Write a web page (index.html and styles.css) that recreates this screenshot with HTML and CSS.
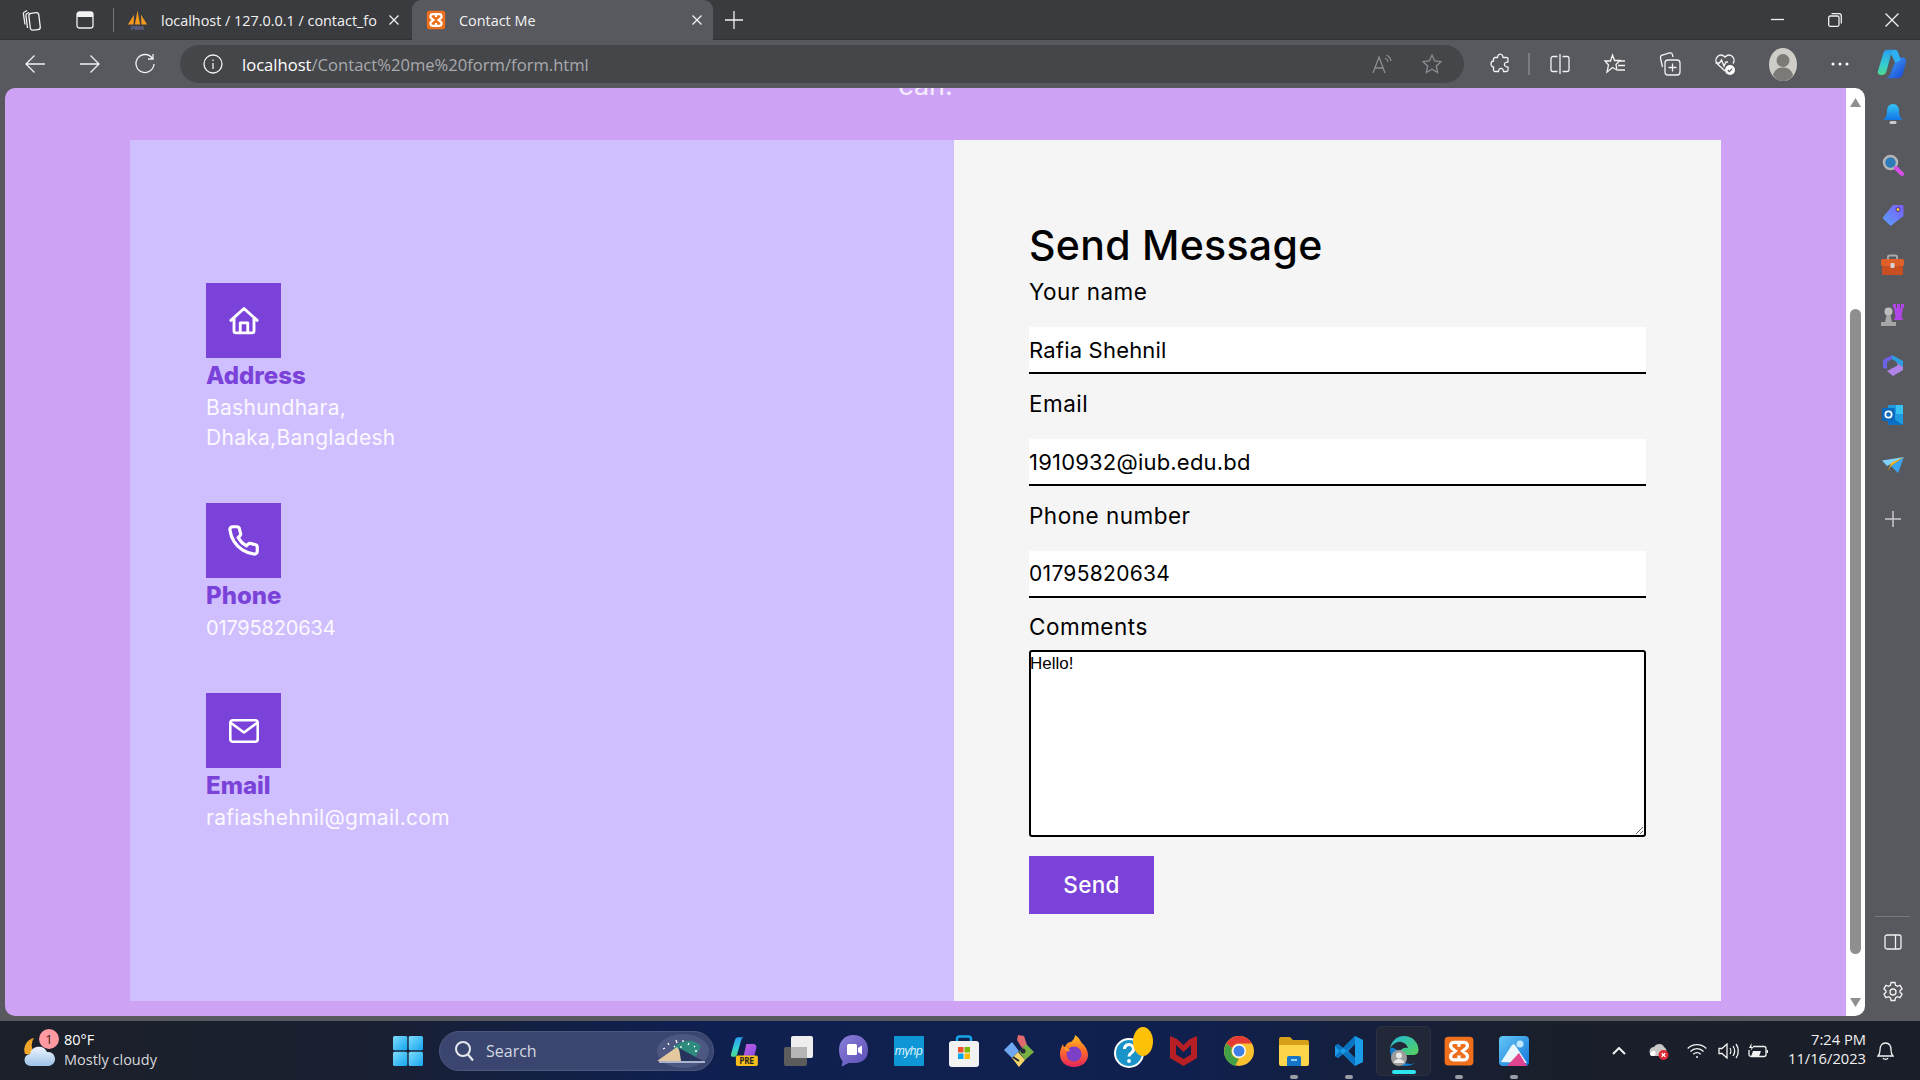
FILE: index.html
```html
<!DOCTYPE html>
<html lang="en">
<head>
<meta charset="utf-8">
<title>Contact Me</title>
<link rel="stylesheet" href="styles.css">
</head>
<body>
<svg class="defs" width="0" height="0">
  <defs>
    <linearGradient id="gBlue" x1="0" y1="0" x2="0" y2="1"><stop offset="0" stop-color="#35c4f6"/><stop offset="1" stop-color="#1076e6"/></linearGradient>
    <linearGradient id="gCop1" x1="0" y1="0" x2="0" y2="1"><stop offset="0" stop-color="#2a9df0"/><stop offset=".6" stop-color="#35cfd0"/><stop offset="1" stop-color="#4fd88a"/></linearGradient>
    <linearGradient id="gCop2" x1="0" y1="0" x2="1" y2="1"><stop offset="0" stop-color="#4aa8f5"/><stop offset="1" stop-color="#1245d8"/></linearGradient>
    <linearGradient id="gCopP" x1="0" y1="0" x2="1" y2="1"><stop offset="0" stop-color="#d05fe0"/><stop offset="1" stop-color="#7b4be8"/></linearGradient>
    <linearGradient id="gTag" x1="0" y1="1" x2="1" y2="0"><stop offset="0" stop-color="#5aa0fa"/><stop offset="1" stop-color="#7a5cf5"/></linearGradient>
    <linearGradient id="gWin" x1="0" y1="0" x2="1" y2="1"><stop offset="0" stop-color="#7fdcfb"/><stop offset="1" stop-color="#14a5f0"/></linearGradient>
    <linearGradient id="gChat" x1="0" y1="0" x2="1" y2="1"><stop offset="0" stop-color="#8a7fd8"/><stop offset="1" stop-color="#5b4fb8"/></linearGradient>
    <linearGradient id="gFox" x1="0" y1="0" x2="0" y2="1"><stop offset="0" stop-color="#ffc21f"/><stop offset=".5" stop-color="#ff6a2a"/><stop offset="1" stop-color="#e5245e"/></linearGradient>
    <linearGradient id="gEdge" x1="0" y1="0" x2="1" y2="1"><stop offset="0" stop-color="#1fb8d8"/><stop offset="1" stop-color="#58d25c"/></linearGradient>
    <linearGradient id="gCloud" x1="0" y1="0" x2="0" y2="1"><stop offset="0" stop-color="#eef5fd"/><stop offset="1" stop-color="#9cc2ea"/></linearGradient>
    <linearGradient id="gPhoto" x1="0" y1="0" x2="1" y2="1"><stop offset="0" stop-color="#63c9f7"/><stop offset="1" stop-color="#1273d8"/></linearGradient>
  </defs>
</svg>

<header class="tabbar">
  <span class="slot s52"><svg class="line" width="22" height="24" viewBox="0 0 22 24"><rect x="8.500" y="5" width="10" height="17" rx="2.500" transform="rotate(-7 13 13)"/><path d="M8 4.500 6 5.500A2 2 0 0 0 5 8l1.500 12M6 2.500 3.500 4A2 2 0 0 0 2.500 6.500l1.500 10"/></svg></span>
  <span class="slot s54"><svg class="line" width="20" height="20" viewBox="0 0 20 20"><rect x="2" y="2" width="16" height="16" rx="2.500"/><path class="fillw" d="M2 7V4.500A2.500 2.500 0 0 1 4.500 2h11A2.500 2.500 0 0 1 18 4.500V7z"/></svg></span>
  <span class="tab-sep"></span>
  <div class="tab tab-a">
    <svg class="tab-fav" width="21" height="22" viewBox="0 0 24 24"><path fill="#f39a1f" d="M1 17 8 6l-.5 11zM9 17l3-16 3 16zM16.500 17 16 6l7 11z"/><text x="12" y="23.500" class="pma">PMA</text></svg>
    <span class="tab-text">localhost / 127.0.0.1 / contact_fo</span>
    <svg class="line tab-x" width="12" height="12" viewBox="0 0 12 12"><path d="m1.500 1.500 9 9m0-9-9 9"/></svg>
  </div>
  <div class="tab tab-b">
    <svg class="tab-fav" width="20" height="20" viewBox="0 0 24 24"><rect x="1" y="1" width="22" height="22" rx="3" fill="#ee6f1c"/><path class="xampp" d="M8 5h8c3 0 3.500 3.500 1.500 5L15 12l2.500 2c2 1.500 1.500 5-1.500 5H8c-3 0-3.500-3.500-1.500-5L9 12 6.500 10C4.500 8.500 5 5 8 5zM12 5v3.500M12 15.500V19"/></svg>
    <span class="tab-text tab-text-b">Contact Me</span>
    <svg class="line tab-x" width="12" height="12" viewBox="0 0 12 12"><path d="m1.500 1.500 9 9m0-9-9 9"/></svg>
  </div>
  <span class="slot s42"><svg class="line" width="18" height="18" viewBox="0 0 18 18"><path d="M9 0v18M0 9h18"/></svg></span>
  <span class="grow"></span>
  <span class="slot s57"><svg class="line" width="13" height="13" viewBox="0 0 13 13"><path d="M0 6.500h13"/></svg></span>
  <span class="slot s57"><svg class="line" width="14" height="14" viewBox="0 0 14 14"><rect x=".7" y="3" width="10.300" height="10.300" rx="1.500"/><path d="M3.500.7H11A2.300 2.300 0 0 1 13.300 3v7.500"/></svg></span>
  <span class="slot s57"><svg class="line" width="14" height="14" viewBox="0 0 14 14"><path d="m.5.500 13 13m0-13-13 13"/></svg></span>
</header>

<nav class="toolbar">
  <span class="slot s55"><svg class="line" width="22" height="20" viewBox="0 0 22 20"><path d="M21 10H2M10.500 1.500 2 10l8.500 8.500"/></svg></span>
  <span class="slot s55"><svg class="line" width="22" height="20" viewBox="0 0 22 20"><path d="M1 10h19M11.500 1.500 20 10l-8.500 8.500"/></svg></span>
  <span class="slot s55"><svg class="line" width="22" height="22" viewBox="0 0 22 22"><path d="M18.500 5.500A9 9 0 1 0 20 11M19 1v5h-5"/></svg></span>
  <div class="addr">
    <svg class="line info" width="20" height="20" viewBox="0 0 20 20"><circle cx="10" cy="10" r="9"/><path d="M10 9v6M10 5.500v1.500"/></svg>
    <span class="url"><span class="url-host">localhost</span>/Contact%20me%20form/form.html</span>
    <span class="grow"></span>
    <svg class="dim" width="24" height="22" viewBox="0 0 24 22"><path d="m2 20 6-16 6 16M4 15h8"/><path d="M14 5a5 5 0 0 1 3 4M15.500 2a8 8 0 0 1 4.500 6"/></svg>
    <svg class="dim addr-star" width="22" height="22" viewBox="0 0 22 22"><path d="m11 2 2.700 6 6.300.7-4.700 4.300 1.300 6.500L11 16.200 5.400 19.500 6.700 13 2 8.700 8.300 8z"/></svg>
  </div>
  <span class="slot s55 first-tool"><svg class="line" width="20" height="22" viewBox="0 0 20 22"><path d="M8 2.500a2.500 2.500 0 0 1 4.500 0c.3.800.3 1.500.5 2h3.500a1.500 1.500 0 0 1 1.500 1.500v3c-.7.300-1.500 0-2.300.5a2.200 2.200 0 0 0 0 4c.8.500 1.600.200 2.300.5v3a1.500 1.500 0 0 1-1.500 1.500h-3c-.3-.8 0-1.500-.6-2.200a2.300 2.300 0 0 0-3.800 0c-.6.700-.3 1.400-.6 2.200H5a1.500 1.500 0 0 1-1.500-1.500v-3C2.500 14 1 13 1 11s1.500-3 2.500-3V6A1.500 1.500 0 0 1 5 4.500h2.500c.200-.5.200-1.200.5-2z"/></svg></span>
  <span class="tool-sep"></span>
  <span class="slot s55"><svg class="line" width="20" height="22" viewBox="0 0 20 22"><path d="M7.500 3.500H3a2 2 0 0 0-2 2v11a2 2 0 0 0 2 2h4.500M12.500 3.500H17a2 2 0 0 1 2 2v11a2 2 0 0 1-2 2h-4.500M10 1v20"/></svg></span>
  <span class="slot s55"><svg class="line" width="22" height="22" viewBox="0 0 22 22"><path d="m8.500 2 2 5.500H16l-4 4 1 5.500L8.500 14.500 3 19l1.500-7L1 8h5.500zM14.500 8H21M14 12.500h7M14 17h7"/></svg></span>
  <span class="slot s55"><svg class="line" width="22" height="24" viewBox="0 0 22 24"><rect x="6" y="8" width="15" height="15" rx="3"/><path d="M13.500 11.500v8M9.500 15.500h8M3.500 15 1.500 6A2.500 2.500 0 0 1 3.500 3l7-2a2.500 2.500 0 0 1 3 1.800L14 5"/></svg></span>
  <span class="slot s55"><svg width="22" height="24" viewBox="0 0 22 24"><path class="line-p" d="M11 19 3 11.500C-.5 7 5.500-.5 11 5c5.500-5.500 11.500 2 8 6.500M1.500 11h4l2-3 2.500 6 2-4h2"/><circle cx="16" cy="18" r="5" fill="#fff"/><path d="m13.800 18 1.600 1.600 2.800-3" fill="none" stroke="#58595e" stroke-width="1.300"/></svg></span>
  <span class="slot s60"><svg width="28" height="33" viewBox="0 0 28 33"><ellipse cx="14" cy="16.500" rx="14" ry="16.500" fill="#cfcdc8"/><circle cx="14" cy="12.500" r="6.500" fill="#7b7a76"/><path d="M4 27c2-6 6-7.500 10-7.500s8 1.500 10 7.500c-2 3.500-6 6-10 6s-8-2.500-10-6z" fill="#7b7a76"/></svg></span>
  <span class="slot s54"><svg width="18" height="4" viewBox="0 0 18 4"><circle cx="2" cy="2" r="1.500" fill="#fff"/><circle cx="9" cy="2" r="1.500" fill="#fff"/><circle cx="16" cy="2" r="1.500" fill="#fff"/></svg></span>
  <span class="slot s50"><svg width="31" height="32" viewBox="0 0 24 24"><path fill="url(#gCop1)" d="M9 1h5.500c-1.200 0-2.300 1-2.800 3L8 18c-.500 1.500-1.500 2.500-3 2.500H3.500c-1.800 0-2.500-1.300-2-3L5.500 4C6 2 7.300 1 9 1z"/><path fill="url(#gCop2)" d="M16 7h4.500c2 0 3.200 1.500 2.700 3.500L21 19c-.700 2.500-2.200 4-4.500 4H7c2 0 3.400-1 4-3z"/><path fill="#2fb0f4" d="M11.500 4c.500-2 1.600-3 3-3 1.500 0 2.500 1 3 3l1.500 5-4 2z"/></svg></span>
</nav>

<div class="main">
  <div class="viewport">
    <main class="page">
      <div class="cut-text"><span>can.</span></div>
      <section class="card">
        <div class="info-panel">
          <article class="contact">
            <span class="contact-icon"><svg class="line-w" width="30" height="30" viewBox="0 0 24 24"><path d="M1.500 11.500 12 2l10.500 9.500M4 10v10a1.500 1.500 0 0 0 1.500 1.500h13A1.500 1.500 0 0 0 20 20V10M9 21.500v-8h6v8"/></svg></span>
            <h3>Address</h3>
            <p>Bashundhara,<br>Dhaka,Bangladesh</p>
          </article>
          <article class="contact">
            <span class="contact-icon"><svg class="line-w" width="33" height="33" viewBox="0 0 24 24"><path d="M22 16.920v3a2 2 0 0 1-2.180 2 19.790 19.790 0 0 1-8.630-3.070 19.500 19.500 0 0 1-6-6 19.790 19.790 0 0 1-3.070-8.670A2 2 0 0 1 4.110 2h3a2 2 0 0 1 2 1.720 12.840 12.840 0 0 0 .7 2.810 2 2 0 0 1-.45 2.110L8.090 9.910a16 16 0 0 0 6 6l1.270-1.270a2 2 0 0 1 2.110-.45 12.840 12.840 0 0 0 2.810.7A2 2 0 0 1 22 16.920z"/></svg></span>
            <h3>Phone</h3>
            <p class="digits">01795820634</p>
          </article>
          <article class="contact">
            <span class="contact-icon"><svg class="line-w line-mail" width="30" height="24" viewBox="0 0 30 24"><rect x="1.300" y="1.300" width="27.400" height="21.400" rx="2.500"/><path d="m2 4 13 9.500L28 4"/></svg></span>
            <h3>Email</h3>
            <p>rafiashehnil@gmail.com</p>
          </article>
        </div>
        <form class="form-panel">
          <h2>Send Message</h2>
          <label class="lbl lbl-first" for="f1">Your name</label>
          <input class="field" id="f1" type="text" value="Rafia Shehnil">
          <label class="lbl" for="f2">Email</label>
          <input class="field" id="f2" type="text" value="1910932@iub.edu.bd">
          <label class="lbl" for="f3">Phone number</label>
          <input class="field field-num" id="f3" type="text" value="01795820634">
          <label class="lbl lbl-area" for="f4">Comments</label>
          <textarea class="area" id="f4">Hello!</textarea>
          <button class="send" type="button">Send</button>
        </form>
      </section>
    </main>
    <div class="scrollbar">
      <svg class="arrow-up" width="11" height="9" viewBox="0 0 11 9"><path d="M5.500 0 11 9H0z" fill="#8f8f8f"/></svg>
      <span class="thumb"></span>
      <svg class="arrow-down" width="11" height="9" viewBox="0 0 11 9"><path d="M5.500 9 11 0H0z" fill="#8f8f8f"/></svg>
    </div>
  </div>
  <aside class="sidebar">
    <span class="side-slot"><svg width="20" height="22" viewBox="0 0 20 22"><path fill="url(#gBlue)" d="M10 0c4 0 6 3 6 7 0 4 1 6 3.500 9H.5C3 13 4 11 4 7c0-4 2-7 6-7z"/><rect x="6.500" y="17" width="7" height="3" rx="1.500" fill="#c9c9c9"/></svg></span>
    <span class="side-slot"><svg width="22" height="22" viewBox="0 0 22 22"><circle cx="8.500" cy="8.500" r="6.500" fill="#2f7ab8" stroke="#b5b5b5" stroke-width="2.500"/><path d="m14 14 6 6" stroke="#d84fe6" stroke-width="4" stroke-linecap="round"/></svg></span>
    <span class="side-slot"><svg width="22" height="22" viewBox="0 0 22 22"><path fill="url(#gTag)" d="M11 1h9a1.500 1.500 0 0 1 1.500 1.500V12L10 21a1.800 1.800 0 0 1-2.500 0l-6-6a1.800 1.800 0 0 1 0-2.500z"/><circle cx="16" cy="5.500" r="2" fill="#f7c92d" stroke="#41309a"/></svg></span>
    <span class="side-slot"><svg width="23" height="22" viewBox="0 0 23 22"><path d="M7 6V3a1.500 1.500 0 0 1 1.500-1.500h6A1.500 1.500 0 0 1 16 3v3" fill="none" stroke="#a8a8a8" stroke-width="2"/><rect y="5" width="23" height="7" rx="1.500" fill="#e0602a"/><rect x="1" y="12" width="21" height="9" rx="1.500" fill="#c94f22"/><rect x="9.500" y="9" width="4" height="5" rx="1" fill="#d6d6d6"/></svg></span>
    <span class="side-slot"><svg width="24" height="24" viewBox="0 0 24 24"><rect x="12" y="1" width="3" height="4" fill="#b146e6"/><rect x="16" y="1" width="3" height="4" fill="#b146e6"/><rect x="20" y="1" width="3" height="4" fill="#b146e6"/><path fill="#b146e6" d="M13 5h9l-1.500 9 2 3h-10l2-3z"/><circle cx="7.500" cy="8.500" r="4" fill="#bdbdbd"/><path fill="#a6a6a6" d="M5.500 12h4l1.500 7H4zM0 19h15v4H0z"/></svg></span>
    <span class="side-slot"><svg width="22" height="22" viewBox="0 0 22 22"><path fill="#6c62e8" d="M1 6 10 1v4L5 8v7l-4-1z"/><path fill="#2a9fe0" d="M10 1l11 6v6l-6-4-5-4z"/><path fill="#b084e8" d="M21 13v3l-10 6-6-5 4-2 6-6z"/><path fill="#58595e" d="m8 8 5-1.500 3 4.500-5 3-3-1z"/></svg></span>
    <span class="side-slot"><svg width="22" height="22" viewBox="0 0 22 22"><rect x="6" y="1" width="15" height="20" rx="1.500" fill="#1e9be0"/><path fill="#36c2f0" d="M14 1h7v9h-7z"/><path fill="#0b6fc4" d="m6 11 15 10H8a2 2 0 0 1-2-2z"/><rect y="4" width="13" height="13" rx="1.500" fill="#0a68bd"/><circle cx="6.500" cy="10.500" r="3.200" fill="none" stroke="#fff" stroke-width="1.700"/></svg></span>
    <span class="side-slot"><svg width="22" height="16" viewBox="0 0 22 16"><path fill="#3aa5f2" d="M22 0 16 16 9 9z"/><path fill="#7fd0fa" d="M0 3.500 22 0 5 9z"/><path fill="#f5b41e" d="m22 0-13 6-3 8 3-5z"/></svg></span>
    <span class="side-slot side-plus"><svg class="soft" width="16" height="16" viewBox="0 0 16 16"><path d="M8 0v16M0 8h16"/></svg></span>
    <span class="grow"></span>
    <span class="side-sep"></span>
    <span class="side-slot"><svg class="line" width="18" height="16" viewBox="0 0 18 16"><rect x="1" y="1" width="16" height="14" rx="2"/><path d="M11.500 1v14"/></svg></span>
    <span class="side-slot"><svg class="line" width="22" height="22" viewBox="0 0 22 22"><circle cx="11" cy="11" r="3"/><path d="M9 1.500h4l.6 2.800 1.800 1 2.700-.9 2 3.400-2.100 1.900v1.600l2.100 1.900-2 3.400-2.700-.9-1.800 1-.6 2.800H9l-.6-2.800-1.800-1-2.700.9-2-3.400 2.100-1.900V9.700L1.900 7.800l2-3.400 2.700.9 1.800-1z"/></svg></span>
  </aside>
</div>

<footer class="taskbar">
  <div class="weather">
    <svg class="weather-ic" width="36" height="34" viewBox="0 0 36 34"><path fill="#f0a52a" d="M12 4a12 12 0 0 0 3 17L3 20A12 12 0 0 1 12 4z"/><path fill="url(#gCloud)" d="M9 32a6 6 0 0 1-1-12 9 9 0 0 1 17-2 7 7 0 0 1 2 14z"/></svg>
    <span class="badge">1</span>
    <div class="weather-text"><span class="temp">80°F</span><span class="cond">Mostly cloudy</span></div>
  </div>
  <span class="tb-win"><svg width="30" height="30" viewBox="0 0 30 30"><rect width="14.300" height="14.300" rx="1.500" fill="url(#gWin)"/><rect x="15.700" width="14.300" height="14.300" rx="1.500" fill="url(#gWin)"/><rect y="15.700" width="14.300" height="14.300" rx="1.500" fill="url(#gWin)"/><rect x="15.700" y="15.700" width="14.300" height="14.300" rx="1.500" fill="url(#gWin)"/></svg></span>
  <div class="search">
    <svg class="search-ic" width="20" height="22" viewBox="0 0 20 22"><circle cx="9" cy="9" r="7" fill="none" stroke="#e6e8ee" stroke-width="2"/><path d="m14 14.500 5 6" stroke="#e6e8ee" stroke-width="2.200"/></svg>
    <span class="search-text">Search</span>
    <svg class="search-art" width="60" height="34" viewBox="0 0 60 34"><ellipse cx="32" cy="17" rx="26" ry="17" fill="#4c5782"/><path d="M22 16a16 13 0 0 1 28-4l-6 12z" fill="#2d8a7c"/><path d="m6 27 20-14 8 11-4 3z" fill="#e3c8a0"/><path d="M28 14 52 27H30z" fill="#27345e"/><rect x="8" y="27" width="46" height="2" fill="#aab4cf"/><g stroke="#fff" stroke-width="1.300"><path d="M12 15l2-1M17 9l1 2M25 6l1 3M32 6v2M38 9l-1 2M44 12l-1 1M23 12l1 1M30 12v2M46 17h-2"/></g></svg>
  </div>
  <span class="tb"><svg width="28" height="30" viewBox="0 0 24 26"><path fill="url(#gCop1)" d="M7 1h5c-1 0-2 1-2.500 3L6 16c-.5 1.500-1.300 2-2.500 2H2.500C1 18 .3 17 .8 15.500L4 4C4.500 2 5.500 1 7 1z"/><path fill="url(#gCopP)" d="M14 7h6c2 0 3.200 1.500 2.700 3.500L21 17c-.5 1.500-1.500 2-2.500 2H9c1.500 0 2.500-1 3-3z"/><rect x="5" y="17" width="19" height="9" rx="1.500" fill="#f7bd1b"/><text x="14.500" y="24.500" class="pre">PRE</text></svg></span>
  <span class="tb"><svg width="30" height="30" viewBox="0 0 30 30"><rect x="7" width="22" height="22" rx="2" fill="#eeeeee"/><rect y="11" width="23" height="19" rx="2" fill="#5c5c5c"/><rect x="7" y="11" width="16" height="11" fill="#b5b5b5"/></svg></span>
  <span class="tb"><svg width="29" height="32" viewBox="0 0 29 32"><path fill="url(#gChat)" d="M14.500 0C23 0 29 6 29 15c0 8-5 13-13 13H9.500L4 31c-1 .5-1.500 0-1.300-1l1-3.500C1.500 24 0 20 0 15 0 6 6 0 14.500 0z"/><rect x="8" y="9" width="10" height="11" rx="1.500" fill="#fff"/><path fill="#fff" d="m19 13 4-2.500v9L19 17z"/></svg></span>
  <span class="tb"><span class="myhp"><span>myhp</span></span></span>
  <span class="tb"><svg width="30" height="32" viewBox="0 0 30 32"><path fill="none" stroke="#17a4e8" stroke-width="2.500" d="M8 8V4a2.500 2.500 0 0 1 2.500-2.500h9A2.500 2.500 0 0 1 22 4v4"/><rect y="6" width="30" height="26" rx="3" fill="#f2f2f2"/><rect x="9" y="12" width="5.500" height="5.500" fill="#f0502d"/><rect x="15.500" y="12" width="5.500" height="5.500" fill="#7eb900"/><rect x="9" y="18.500" width="5.500" height="5.500" fill="#00a4ef"/><rect x="15.500" y="18.500" width="5.500" height="5.500" fill="#ffb900"/></svg></span>
  <span class="tb"><svg width="32" height="32" viewBox="0 0 32 32"><path fill="#e06a70" d="M15 0l6 1 3 9-5 3-5-8z"/><path fill="#6fa7f2" d="M9 7l7 9-7 7-8-8z"/><path fill="#79b043" d="M23 9l8 8-9 8-6-8z"/><path fill="#f5d66a" d="M9 23l6-6 7 8-6 7z"/><circle cx="20" cy="16" r="2.500" fill="#23283a"/><path d="M10 22l6 4" stroke="#23283a" stroke-width="2"/></svg></span>
  <span class="tb"><svg width="30" height="32" viewBox="0 0 30 32"><path fill="url(#gFox)" d="M16 0c6 4 5 7 8 9 4 4 5 9 5 11 0 7-6 12-14 12S1 27 1 19c0-5 2-8 3-10 0 2 1 3 2 3 1-3 3-5 6-5 2-2 4-4 4-7z"/><circle cx="15" cy="19" r="7.500" fill="#7b3fc8"/><path fill="#ff9a2a" d="M5 12c3 0 5 2 6 4-3 1-5 0-6-4z"/></svg></span>
  <span class="tb tb-help"><svg width="30" height="36" viewBox="0 0 30 36"><circle cx="15" cy="21" r="14" fill="#1a93c8" stroke="#fff" stroke-width="2"/><path d="M10.500 17a4.500 4.500 0 1 1 7 3.700c-1.500 1-2.500 1.800-2.500 3.800" fill="none" stroke="#fff" stroke-width="3"/><circle cx="15" cy="29" r="1.900" fill="#fff"/></svg><span class="dot"></span></span>
  <span class="tb"><svg width="27" height="30" viewBox="0 0 27 30"><path fill="#b62024" d="M0 0l7 3 6.500 6L20 3l7-3v22l-13.500 8L0 22zm6 9v9.500l7.500 4.500 7.500-4.500V9l-7.500 7z" fill-rule="evenodd"/></svg></span>
  <span class="tb"><svg width="30" height="30" viewBox="0 0 30 30"><circle cx="15" cy="15" r="15" fill="#fbc02d"/><path fill="#e53935" d="M15 0a15 15 0 0 1 13 7.500H15a7.500 7.500 0 0 0-7 4.500L2.500 7.500A15 15 0 0 1 15 0z"/><path fill="#43a047" d="M2.500 7.500 8 12a7.500 7.500 0 0 0 7 10.500l-4 7.500A15 15 0 0 1 2.500 7.500z"/><circle cx="15" cy="15" r="7" fill="#fff"/><circle cx="15" cy="15" r="5.500" fill="#3f7fe8"/></svg></span>
  <span class="tb tb-run"><svg width="30" height="30" viewBox="0 0 30 30"><path fill="#d6a018" d="M0 3a2 2 0 0 1 2-2h9l3 3h14a2 2 0 0 1 2 2v6H0z"/><path fill="#fdd54b" d="M0 9h30v19a2 2 0 0 1-2 2H2a2 2 0 0 1-2-2z"/><path fill="#1674c6" d="M8 22a2 2 0 0 1 2-2h10a2 2 0 0 1 2 2v8H8z"/><rect x="12" y="23" width="6" height="2" fill="#8fd0f5"/></svg></span>
  <span class="tb tb-run"><svg width="30" height="30" viewBox="0 0 30 30"><path fill="#1a9ce8" d="M21 0l8 4v22l-8 4L9 18 4 22l-3-2V10l3-2 5 4zm0 8-7 7 7 7z" fill-rule="evenodd"/><path fill="#0a74c4" d="M21 0 1 20l3 2L21 8zM1 10l3-2 17 14v8z"/></svg></span>
  <span class="tb tb-active"><svg width="30" height="32" viewBox="0 0 30 32"><path fill="url(#gEdge)" d="M15 1C24 1 29.500 8 29.500 15c0 3-2 5-6 5H10c0-5 4-8 9-7-1-4-6-7-10-6C5 8 2 11 1 14 2 7 7 1 15 1z"/><path fill="#0f7fd0" d="M1 14c0 9 6 16 14 17 4 .5 8-1 11-3-5 2-12 1-15-5-1-2-1-4-1-5C8 14 3 11 1 14z"/><circle cx="10" cy="23" r="8" fill="#9c9c9c"/><circle cx="10" cy="20.500" r="3" fill="#e6e6e6"/><path d="M4.500 28c1-3 3-4 5.500-4s4.500 1 5.500 4z" fill="#e6e6e6"/></svg></span>
  <span class="tb tb-run"><svg width="30" height="30" viewBox="0 0 24 24"><rect x=".5" y=".5" width="23" height="23" rx="3" fill="#ee6f1c"/><path class="xampp" d="M8 5h8c3 0 3.500 3.500 1.500 5L15 12l2.500 2c2 1.500 1.500 5-1.500 5H8c-3 0-3.500-3.500-1.500-5L9 12 6.500 10C4.500 8.500 5 5 8 5zM12 5v3.500M12 15.500V19"/></svg></span>
  <span class="tb tb-run"><svg width="30" height="30" viewBox="0 0 30 30"><rect width="30" height="30" rx="4" fill="url(#gPhoto)"/><circle cx="21" cy="8" r="3.500" fill="#bfe6fb"/><path d="M2 26 13 9c1-1 2-1 3 0l12 18z" fill="#fff" opacity=".9"/><path d="M8 30 20 17l8 13z" fill="#e0448e"/></svg></span>
  <span class="grow"></span>
  <div class="tray">
    <svg class="tray-chev line" width="14" height="8" viewBox="0 0 14 8"><path d="m1 7 6-6 6 6"/></svg>
    <svg class="tray-cloud" width="20" height="18" viewBox="0 0 20 18"><path fill="#c8c8c8" d="M5 14a4.500 4.500 0 0 1 0-9c2-4 9-4 10 0 2 1 3 3 2 5l-5 4z"/><path fill="#fff" d="M1 12a4 4 0 0 1 5-3c1 2 1 4-1 5H3a2 2 0 0 1-2-2z"/><circle cx="14.500" cy="13" r="5" fill="#dc2b36"/><path d="m12.700 11.200 3.600 3.600m0-3.600-3.600 3.600" stroke="#fff" stroke-width="1.300"/></svg>
    <svg class="tray-wifi line" width="20" height="16" viewBox="0 0 20 16"><path d="M.7 5.500a13 13 0 0 1 18.600 0M3.500 8.500a9 9 0 0 1 13 0M6.300 11.300a5 5 0 0 1 7.400 0"/><circle class="fillw" cx="10" cy="14" r="1"/></svg>
    <svg class="tray-vol line" width="21" height="16" viewBox="0 0 21 16"><path d="M1 5.500h3L9 1v14l-5-4.500H1zM12 5c1 1.500 1 4.500 0 6M15 3c2 3 2 7 0 10M18 1c3 4 3 10 0 14"/></svg>
    <svg class="tray-bat line" width="20" height="16" viewBox="0 0 20 16"><path d="M5 3.500h11a2 2 0 0 1 2 2v6a2 2 0 0 1-2 2H3a2 2 0 0 1-2-2V7"/><path class="fillw" d="M3 13.500 5 8l8 0-2 5.500zM18.500 7H20v3h-1.500zM3.500 0 1 5h2.500L2.500 8l3-4H3.500z"/></svg>
    <div class="clock"><span>7:24 PM</span><span>11/16/2023</span></div>
    <svg class="tray-bell line" width="17" height="18" viewBox="0 0 17 18"><path d="M1 14c1.500-1.500 2-3 2-6 0-4 2-7 5.500-7S14 4 14 8c0 3 .5 4.500 2 6zM6 16c.5 1 1.500 1.300 2.500 1.300s2-.3 2.500-1.300"/></svg>
  </div>
</footer>
</body>
</html>
```
FILE: styles.css
```css
* { box-sizing: border-box; }
html, body { margin: 0; height: 100%; }
body {
  display: flex; flex-direction: column; width: 1920px; height: 1080px; overflow: hidden;
  background: #58595e; font-family: "Open Sans", "Noto Sans", sans-serif; color: #fff;
}
.defs { position: absolute; }
.grow { flex: 1; }
.line, .line-w, .line-p, .soft, .dim { fill: none; stroke: #f2f2f2; stroke-width: 1.300; }
.line-p { stroke-width: 1.400; }
.line-w { stroke: #fff; stroke-width: 2.300; stroke-linejoin: round; stroke-linecap: round; }
.line-mail { stroke-width: 2.600; }
.soft { stroke: #c9c9cc; stroke-width: 1.500; }
.dim { stroke: #8d8e92; }
.fillw { fill: #f2f2f2; stroke: none; }
.slot { display: flex; align-items: center; justify-content: center; flex: none; height: 100%; }
.s42 { width: 42px; } .s50 { width: 50px; } .s52 { width: 52px; } .s54 { width: 54px; }
.s55 { width: 55px; } .s57 { width: 57px; } .s60 { width: 60px; }

.tabbar { display: flex; height: 40px; flex: none; background: #3a3b3f; padding-left: 6px; border-bottom: 1px solid #303135; }
.tab-sep { width: 1px; height: 24px; margin: 8px 1px 0 1px; background: #77787b; flex: none; }
.tab { display: flex; align-items: center; flex: none; height: 40px; }
.tab-a { width: 297px; padding-left: 12px; }
.tab-b { width: 301px; padding-left: 14px; background: #58595e; border-radius: 9px 9px 0 0; }
.tab-fav { flex: none; }
.tab-text { font-size: 14.400px; margin-left: 13px; width: 217px; white-space: nowrap; overflow: hidden; color: #f2f2f2; }
.tab-text-b { margin-left: 13px; width: 222px; }
.tab-x { margin-left: 10px; flex: none; }
.pma { font: italic 700 7px "Liberation Sans", sans-serif; fill: #6a6fa0; text-anchor: middle; }
.pre { font: 700 7px "DejaVu Sans Mono", monospace; fill: #222; text-anchor: middle; }
.xampp { fill: none; stroke: #fff; stroke-width: 2.600; }

.toolbar { display: flex; align-items: center; height: 48px; flex: none; background: #58595e; padding-left: 7.500px; }
.addr { display: flex; align-items: center; width: 1284px; height: 38px; margin-left: 7.500px; flex: none; background: #45464a; border-radius: 19px; padding: 0 21px 0 23px; }
.info { flex: none; }
.url { margin-left: 19px; font-size: 16.600px; color: #a9aaad; white-space: nowrap; }
.url-host { color: #fff; }
.addr-star { margin-left: 26px; }
.first-tool { margin-left: 8.500px; }
.tool-sep { width: 2px; height: 22px; margin-right: 3px; background: #7b7c80; flex: none; }

.main { display: flex; flex: 1; min-height: 0; }
.viewport { display: flex; width: 1860px; margin: 0 0 5px 5px; border-radius: 10px; overflow: hidden; flex: none; }
.page { flex: 1; background: #cea3f6; padding: 0 125px 0 125px; min-width: 0; }
.cut-text { height: 8px; display: flex; align-items: flex-start; justify-content: center; overflow: hidden; font: 400 27px/27px Inter, sans-serif; color: #f4ecff; }
.cut-text span { display: block; margin-top: -16px; }
.card { display: flex; height: 861px; margin-top: 44px; }
.info-panel { width: 824px; background: #cfbffe; padding: 143px 0 0 76px; display: flex; flex-direction: column; gap: 50px; flex: none; font-family: Inter, sans-serif; }
.contact-icon { display: flex; align-items: center; justify-content: center; width: 75px; height: 75px; background: #7a42d9; }
.contact h3 { margin: 3px 0 2px; font-size: 24px; line-height: 30px; font-weight: 800; color: #7a42d9; }
.contact p { margin: 0; font-size: 21px; line-height: 30px; letter-spacing: .28px; color: #fbf8ff; }
.contact .digits { font-size: 20px; letter-spacing: -.17px; }
.form-panel { flex: 1; background: #f5f5f5; padding: 75px 75px 0; display: flex; flex-direction: column; align-items: flex-start; font-family: Inter, sans-serif; color: #000; }
.form-panel h2 { margin: 0 0 5px; font-size: 41px; line-height: 60px; font-weight: 500; letter-spacing: .3px; white-space: nowrap; }
.lbl { display: block; font-size: 22.500px; line-height: 24px; letter-spacing: .5px; margin: 18px 0 23px; }
.lbl-first { margin: 0 0 23px; }
.lbl-area { margin: 17px 0 11px; }
.field { display: block; width: 617px; height: 47px; flex: none; border: 0; border-bottom: 2px solid #000; border-radius: 0; background: #fff; padding: 0; font: 400 22px Inter, sans-serif; letter-spacing: .2px; color: #000; outline: 0; }
.field-num { font-size: 21px; letter-spacing: .3px; }
.area { display: block; width: 617px; height: 187px; flex: none; border: 2px solid #000; border-radius: 3px; background: #fff; padding: 2px 0 0; text-indent: -1px; font: 400 17px "Liberation Sans", Arial, sans-serif; color: #000; outline: 0; }
.send { width: 125px; height: 58px; margin-top: 19px; flex: none; border: 0; background: #7a42d9; color: #fff; font: 500 22.500px Inter, sans-serif; letter-spacing: .3px; padding: 0 0 2px; }

.scrollbar { width: 19px; flex: none; background: #fff; display: flex; flex-direction: column; align-items: center; padding-top: 10px; }
.arrow-up, .arrow-down { display: block; flex: none; }
.thumb { width: 11px; height: 645px; margin-top: 202px; background: #8f8f8f; border-radius: 6px; flex: none; }
.arrow-down { margin-top: 44px; }

.sidebar { flex: 1; display: flex; flex-direction: column; align-items: center; padding: 2px 0 4px; }
.side-slot { display: flex; align-items: center; justify-content: center; height: 50px; flex: none; }
.side-plus { margin-top: 4px; }
.side-sep { width: 35px; height: 1px; background: #77787c; flex: none; }

.taskbar { display: flex; align-items: center; height: 59px; flex: none; background: linear-gradient(90deg, #1b2029 0%, #1a2030 18%, #0f2050 35%, #10204e 62%, #1a1f2c 80%, #1a1e28 100%); }
.weather { position: relative; display: flex; align-items: center; width: 393px; padding-left: 22px; flex: none; }
.weather-ic { flex: none; }
.badge { position: absolute; left: 39px; top: -3px; width: 20px; height: 20px; border-radius: 50%; background: #ff9aa2; color: #3a1a20; font-size: 13px; line-height: 20px; text-align: center; }
.weather-text { display: flex; flex-direction: column; margin: -2px 0 0 6px; font-size: 14.500px; line-height: 20px; }
.temp { color: #fff; }
.cond { color: #d8d9dc; }
.tb-win { display: flex; width: 46px; flex: none; }
.search { display: flex; align-items: center; width: 275px; height: 40px; flex: none; border-radius: 20px; background: #3a4670; border: 1px solid #4c5780; padding-left: 14px; }
.search-ic { flex: none; }
.search-text { margin-left: 12px; font-size: 16px; color: #d5d8e2; }
.search-art { margin-left: auto; margin-right: 2px; }
.tb { position: relative; display: flex; align-items: center; justify-content: center; width: 55px; height: 50px; flex: none; }
.search + .tb { margin-left: 2px; }
.tb-help svg { margin-top: -2px; }
.dot { position: absolute; right: 3px; top: 1px; width: 20px; height: 29px; border-radius: 50%; background: #ffc107; }
.tb-run::after { content: ""; position: absolute; left: 24px; bottom: -3px; width: 8px; height: 4px; border-radius: 2px; background: #9a9da6; }
.tb-active { background: #232838; border-radius: 5px; height: 50px; border: 1px solid #2b3042; }
.tb-active::after { content: ""; position: absolute; left: 15px; bottom: 1px; width: 24px; height: 4px; border-radius: 2px; background: #2ee6f0; }
.myhp { display: flex; align-items: center; justify-content: center; width: 30px; height: 30px; background: #0f96d6; border-radius: 1px; }
.myhp span { font: italic 400 12px "Liberation Sans", sans-serif; color: #dff3fb; letter-spacing: -.5px; }
.tray { display: flex; align-items: center; flex: none; padding-right: 26px; }
.tray-chev { stroke-width: 2; margin-right: 23px; }
.tray-cloud { margin-right: 18.500px; }
.tray-wifi { margin-right: 11px; }
.tray-vol { margin-right: 9px; }
.tray-bat { margin-right: 20px; }
.clock { display: flex; flex-direction: column; align-items: flex-end; font-size: 14.700px; line-height: 19px; color: #f2f2f2; margin: -3px 11px 0 0; }
```
